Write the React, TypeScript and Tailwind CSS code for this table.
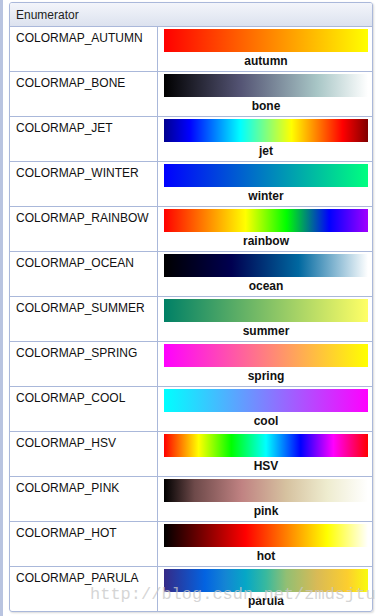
import React from "react";

const maps: { name: string; label: string; grad: string }[] = [
  { name: "COLORMAP_AUTUMN", label: "autumn", grad: "linear-gradient(to right,#ff0000,#ff8000 50%,#ffff00)" },
  { name: "COLORMAP_BONE", label: "bone", grad: "linear-gradient(to right,#000000,#545474 37.5%,#a8c6c6 75%,#ffffff)" },
  { name: "COLORMAP_JET", label: "jet", grad: "linear-gradient(to right,#00008f,#0000ff 12.5%,#00ffff 37.5%,#ffff00 62.5%,#ff0000 87.5%,#800000)" },
  { name: "COLORMAP_WINTER", label: "winter", grad: "linear-gradient(to right,#0000ff,#00ff80)" },
  { name: "COLORMAP_RAINBOW", label: "rainbow", grad: "linear-gradient(to right,#ff0000,#ff8000 20%,#ffff00 40%,#00ff00 60%,#0000ff 81%,#a000ff)" },
  { name: "COLORMAP_OCEAN", label: "ocean", grad: "linear-gradient(to right,#000000,#000050 33%,#0068a0 66%,#ffffff)" },
  { name: "COLORMAP_SUMMER", label: "summer", grad: "linear-gradient(to right,#008066,#ffff66)" },
  { name: "COLORMAP_SPRING", label: "spring", grad: "linear-gradient(to right,#ff00ff,#ffff00)" },
  { name: "COLORMAP_COOL", label: "cool", grad: "linear-gradient(to right,#00ffff,#ff00ff)" },
  { name: "COLORMAP_HSV", label: "HSV", grad: "linear-gradient(to right,#ff0000,#ffff00 17%,#00ff00 33%,#00ffff 50%,#0000ff 67%,#ff00ff 83%,#ff0000)" },
  { name: "COLORMAP_PINK", label: "pink", grad: "linear-gradient(to right,#000000,#6e4a4a 15%,#c08282 38%,#d6c2a0 60%,#eeeccf 80%,#ffffff)" },
  { name: "COLORMAP_HOT", label: "hot", grad: "linear-gradient(to right,#000000,#ff0000 40%,#ffff00 80%,#ffffff)" },
  { name: "COLORMAP_PARULA", label: "parula", grad: "linear-gradient(to right,#352a87,#0363e1 20%,#1485d4 30%,#06a7c6 40%,#38b99e 50%,#92bf73 60%,#d9ba56 75%,#fcce2e 90%,#f9fb0e)" },
];

export default function App() {
  return (
    <div
      className="relative w-[382px] h-[616px] bg-white flex overflow-hidden"
      style={{ fontFamily: '"Liberation Sans", Arial, sans-serif' }}
    >
      <div className="w-[3px] h-full bg-[#b9c4e0]" />
      <div className="ml-[6px] mt-[2px] w-[364px] h-[610px] border border-[#aab8da] rounded-[3px] shadow-[1px_1px_2px_rgba(0,0,0,0.15)] flex flex-col overflow-hidden">
        <div className="h-[24px] shrink-0 flex items-center pl-[6px] text-[12px] text-[#222] border-b border-[#aab8da] bg-[linear-gradient(to_bottom,#f3f5fa,#dce2ef)]">
          Enumerator
        </div>
        {maps.map((m, i) => (
          <div
            key={m.name}
            className={`h-[45px] shrink-0 flex ${i < maps.length - 1 ? "border-b border-[#aab8da]" : ""}`}
          >
            <div className="w-[148px] shrink-0 border-r border-[#aab8da] pl-[6px] pt-[4px] text-[12px] leading-[14px] text-[#111]">
              {m.name}
            </div>
            <div className="flex-1 flex flex-col pl-[6px] pr-[4px] pt-[2px]">
              <div className="h-[23px] w-[204px]" style={{ background: m.grad }} />
              <div className="w-[204px] pt-[2px] text-center text-[12px] leading-[15px] font-bold text-[#111]">
                {m.label}
              </div>
            </div>
          </div>
        ))}
      </div>
      <div
        className="absolute left-[90px] top-[585px] text-[17px] leading-[20px] text-[rgba(200,200,200,0.75)] whitespace-nowrap"
        style={{ fontFamily: '"Liberation Mono", "Courier New", monospace' }}
      >
        http://blog.csdn.net/zmdsjtu
      </div>
    </div>
  );
}
